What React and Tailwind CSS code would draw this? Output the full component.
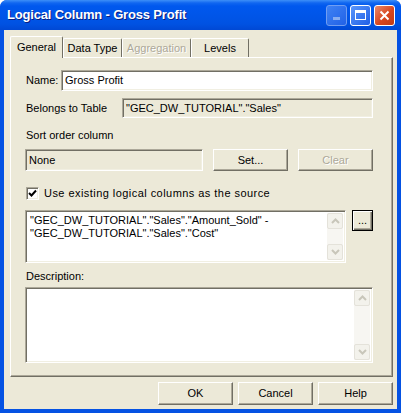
import React from "react";

const sunken =
  "border border-t-[#aca899] border-l-[#aca899] border-r-white border-b-white shadow-[inset_1px_1px_0_#716f64,inset_-1px_-1px_0_#f1efe2]";
const raised =
  "border border-t-white border-l-white border-r-[#716f64] border-b-[#716f64] shadow-[inset_-1px_-1px_0_#aca899]";

function Btn({ children, disabled, w = "w-[75px]", h = "h-[23px]", extra = "" }) {
  return (
    <div
      className={`${w} ${h} ${raised} bg-[#ece9d8] flex items-center justify-center shrink-0 ${extra} ${
        disabled ? "text-[#aca899] [text-shadow:1px_1px_0_#ffffff]" : "text-black"
      }`}
    >
      {children}
    </div>
  );
}

function Chevron({ up }) {
  return (
    <svg width="9" height="6" viewBox="0 0 9 6">
      <path
        d={up ? "M1 5 L4.5 1.5 L8 5" : "M1 1 L4.5 4.5 L8 1"}
        fill="none"
        stroke="#c8c6ba"
        strokeWidth="2"
      />
    </svg>
  );
}

function Scrollbar() {
  return (
    <div className="w-[16px] h-full bg-[#f7f6f2] flex flex-col justify-between">
      <div className="h-[16px] w-[16px] rounded-[2px] border border-[#e4e2da] bg-[#f3f2ec] flex items-center justify-center">
        <Chevron up />
      </div>
      <div className="h-[16px] w-[16px] rounded-[2px] border border-[#e4e2da] bg-[#f3f2ec] flex items-center justify-center">
        <Chevron />
      </div>
    </div>
  );
}

function Tab({ children, selected, disabled, w }) {
  return (
    <div
      className={`${w} ${
        selected ? "h-[22px] -mb-px z-10 bg-[#ece9d8]" : "h-[19px]"
      } relative border-t border-l border-t-white border-l-white border-r border-r-[#716f64] rounded-t-[2px] flex items-center justify-center ${
        disabled ? "text-[#aca899] [text-shadow:1px_1px_0_#ffffff]" : "text-black"
      }`}
    >
      {children}
    </div>
  );
}

export default function App() {
  return (
    <div
      className="w-[401px] h-[413px] flex flex-col bg-[#0552e3] rounded-t-[7px] overflow-hidden text-[11px] leading-[13px]"
      style={{ fontFamily: '"Liberation Sans", Arial, sans-serif' }}
    >
      {/* Title bar */}
      <div className="h-[30px] shrink-0 flex items-center pl-[7px] pr-[6px] bg-[linear-gradient(to_bottom,#3d8ff8_0px,#1066f0_3px,#0058ee_6px,#0055e8_16px,#0052e2_24px,#0048d4_30px)]">
        <div className="flex-1 text-white font-bold text-[13px] leading-[16px] tracking-[-0.17px] [text-shadow:1px_1px_0_#0a1e80]">
          Logical Column - Gross Profit
        </div>
        <div className="flex items-center gap-[3px]">
          <div className="w-[21px] h-[21px] rounded-[3px] border border-[#8cb0f4] bg-[linear-gradient(135deg,#4f8ef6,#2a66e8)] flex items-end justify-center pb-[5px] opacity-80">
            <div className="w-[7px] h-[3px] bg-[#a9c3f4]" />
          </div>
          <div className="w-[21px] h-[21px] rounded-[3px] border border-white bg-[linear-gradient(135deg,#5a96fb,#1f5fe6)] flex items-center justify-center">
            <div className="w-[11px] h-[10px] border border-white border-t-[3px]" />
          </div>
          <div className="w-[21px] h-[21px] rounded-[3px] border border-white bg-[linear-gradient(135deg,#e98a6c,#d8461f_55%,#c13b15)] flex items-center justify-center">
            <svg width="11" height="11" viewBox="0 0 11 11">
              <path d="M1.5 1.5 L9.5 9.5 M9.5 1.5 L1.5 9.5" stroke="white" strokeWidth="2" />
            </svg>
          </div>
        </div>
      </div>

      {/* Body */}
      <div className="flex-1 mx-[4px] mb-[4px] bg-[#ece9d8] pt-[6px] pl-[6px] pr-[4px] flex flex-col">
        {/* Tabs */}
        <div className="h-[21px] flex items-end">
          <Tab selected w="w-[53px]">General</Tab>
          <Tab w="w-[59px]">Data Type</Tab>
          <Tab disabled w="w-[69px]">Aggregation</Tab>
          <Tab w="w-[58px]">Levels</Tab>
        </div>

        {/* Panel */}
        <div className="w-[383px] h-[320px] border border-t-white border-l-white border-r-[#716f64] border-b-[#716f64] shadow-[inset_-1px_-1px_0_#aca899] pt-[12px] pl-[14px] flex flex-col">
          {/* Name */}
          <div className="flex items-center h-[21px]">
            <div className="w-[36px] pl-px">Name:</div>
            <div className={`w-[312px] h-[21px] bg-white ${sunken} flex items-center pl-[3px]`}>
              Gross Profit
            </div>
          </div>
          {/* Belongs */}
          <div className="flex items-center h-[20px] mt-[7px]">
            <div className="w-[97px] pl-px">Belongs to Table</div>
            <div className={`w-[251px] h-[20px] ${sunken} flex items-center pl-[3px]`}>
              "GEC_DW_TUTORIAL"."Sales"
            </div>
          </div>
          {/* Sort order */}
          <div className="mt-[11px] pl-px">Sort order column</div>
          <div className="flex items-center mt-[7px] h-[22px]">
            <div className={`w-[178px] h-[22px] ${sunken} flex items-center pl-[3px]`}>None</div>
            <Btn extra="ml-[10px]" h="h-[22px]">Set...</Btn>
            <Btn extra="ml-[10px]" h="h-[22px]" disabled>
              Clear
            </Btn>
          </div>
          {/* Checkbox */}
          <div className="flex items-center mt-[16px] h-[13px]">
            <div className={`w-[13px] h-[13px] bg-white ${sunken} flex items-center justify-center ml-px`}>
              <svg width="9" height="9" viewBox="0 0 9 9">
                <path d="M1 4 L3.5 6.5 L8 1.5" fill="none" stroke="black" strokeWidth="2" />
              </svg>
            </div>
            <div className="ml-[5px] tracking-[0.45px]">Use existing logical columns as the source</div>
          </div>
          {/* Expression */}
          <div className="flex items-start mt-[10px]">
            <div className={`w-[321px] h-[53px] bg-white ${sunken} flex p-[2px]`}>
              <div className="flex-1 pl-[2px] pt-[1px] leading-[13px]">
                <div>"GEC_DW_TUTORIAL"."Sales"."Amount_Sold" -</div>
                <div>"GEC_DW_TUTORIAL"."Sales"."Cost"</div>
              </div>
              <Scrollbar />
            </div>
            <Btn extra="ml-[6px] !border-black shadow-[inset_1px_1px_0_#ffffff,inset_-1px_-1px_0_#716f64,inset_-2px_-2px_0_#aca899]" w="w-[21px]" h="h-[21px]">
              ...
            </Btn>
          </div>
          {/* Description */}
          <div className="mt-[7px] pl-px">Description:</div>
          <div className={`w-[348px] h-[76px] mt-[4px] bg-white ${sunken} flex justify-end p-[2px]`}>
            <Scrollbar />
          </div>
        </div>

        {/* Bottom buttons */}
        <div className="flex justify-end gap-[5px] mt-[5px]">
          <Btn>OK</Btn>
          <Btn>Cancel</Btn>
          <Btn>Help</Btn>
        </div>
      </div>
    </div>
  );
}
